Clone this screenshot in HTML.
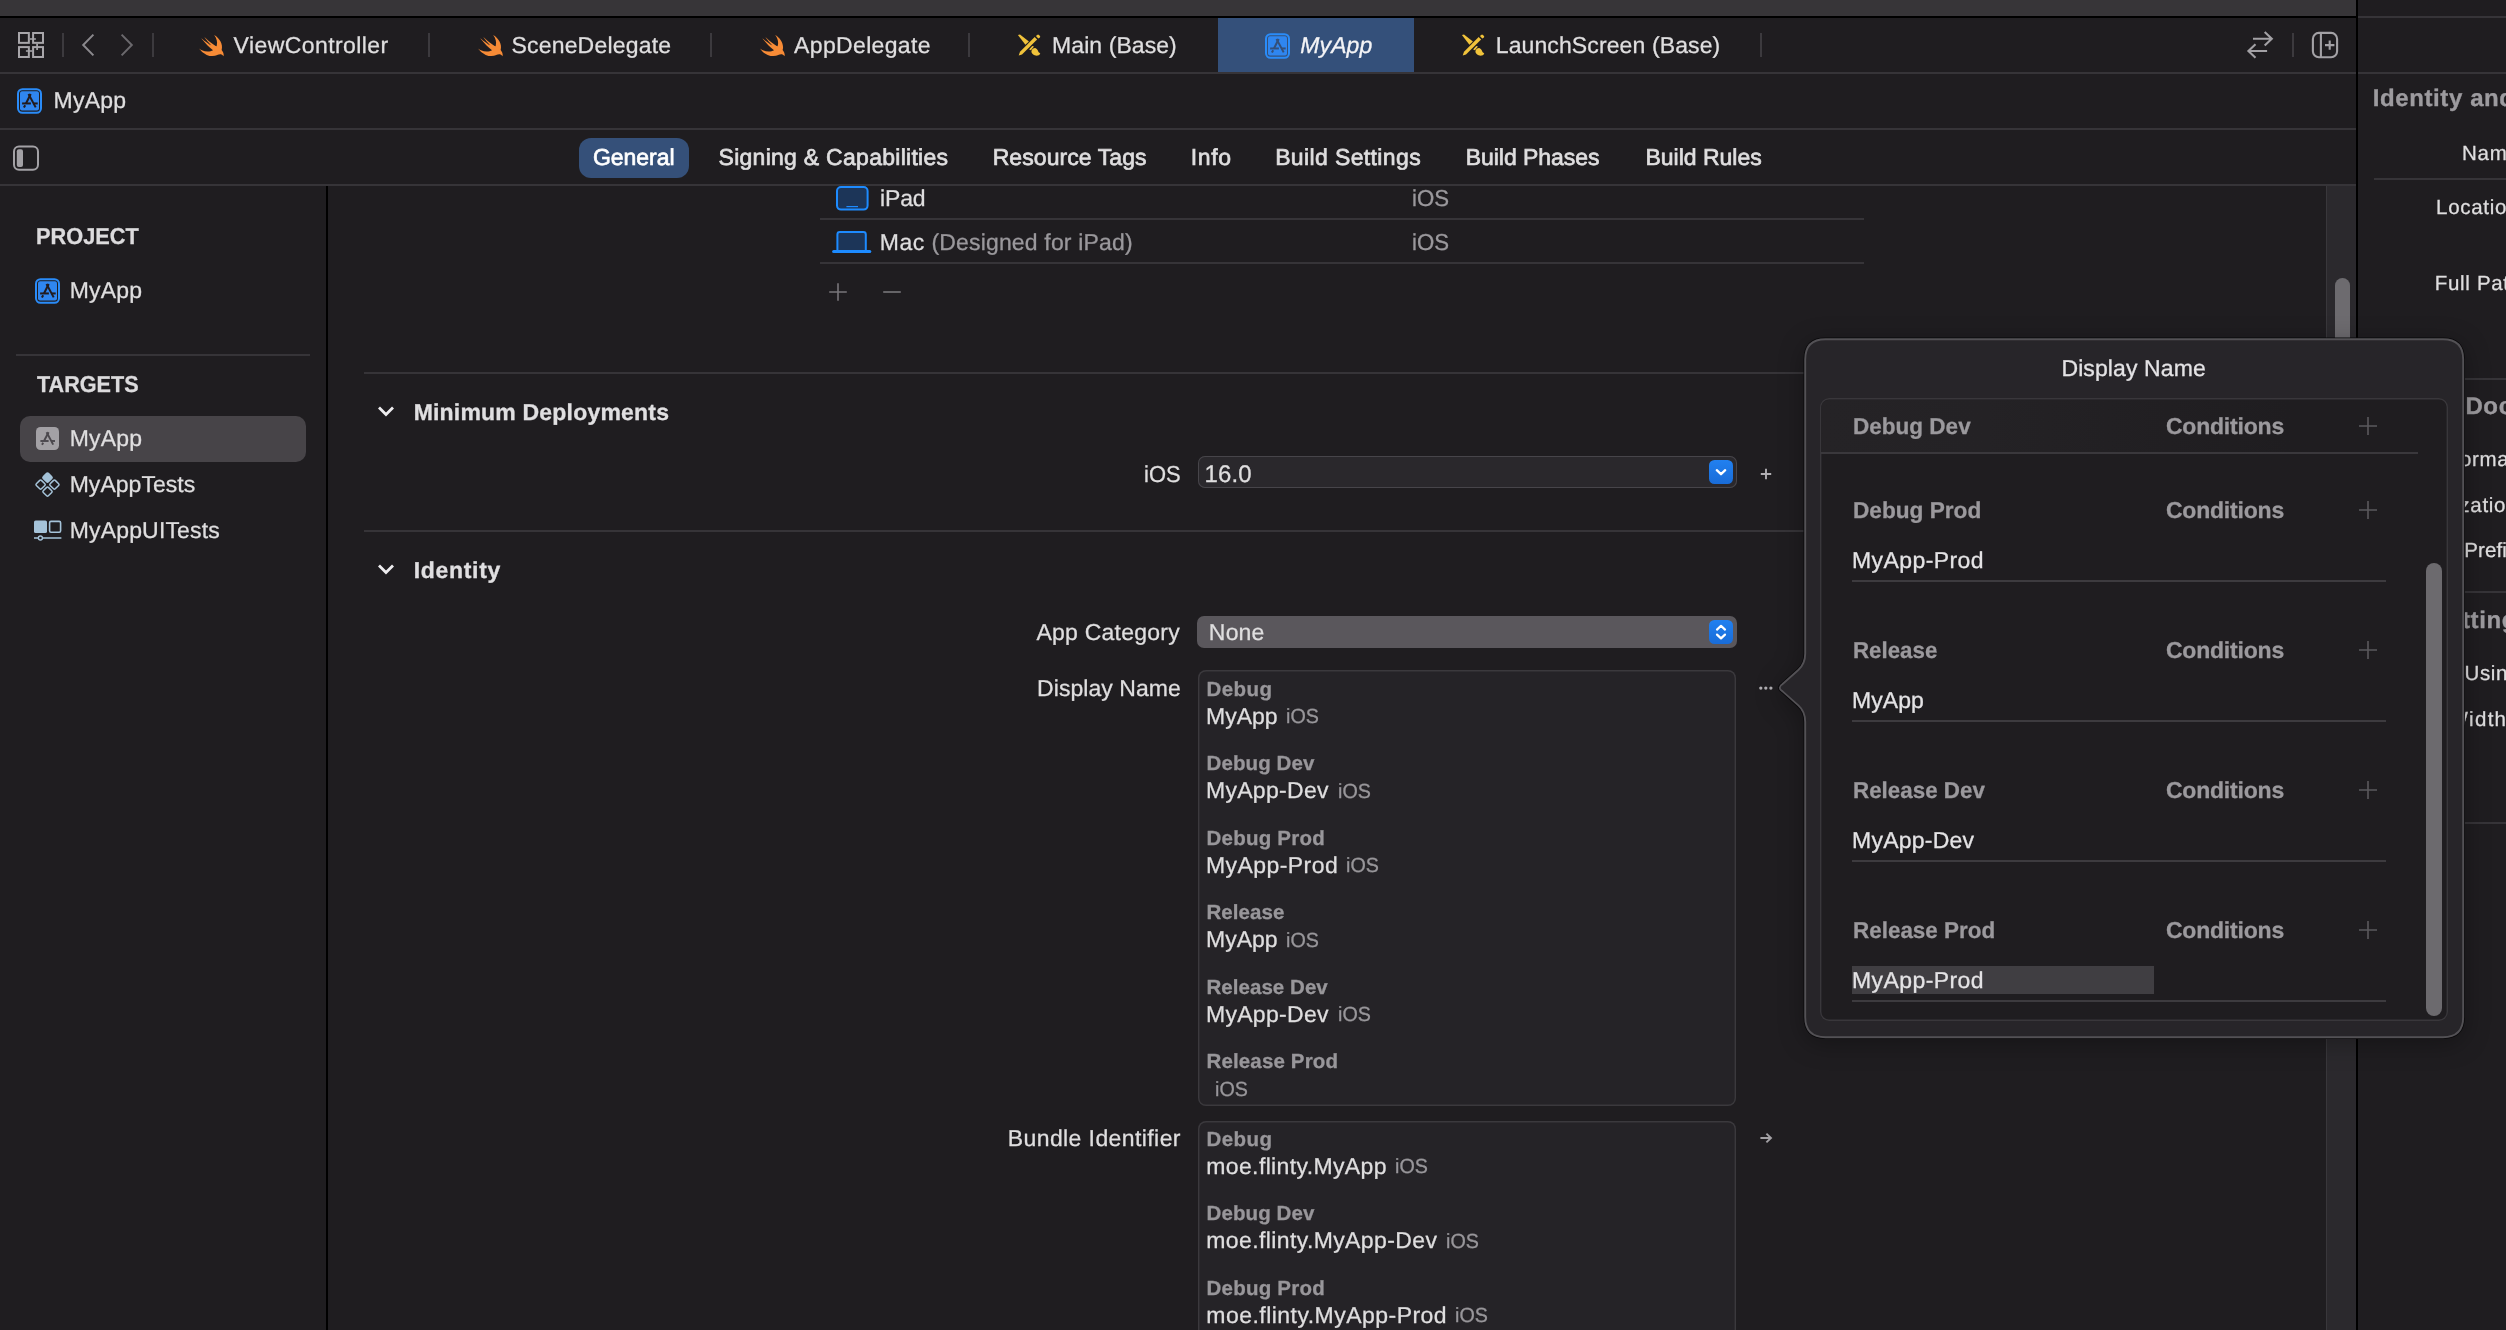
<!DOCTYPE html>
<html lang="en"><head><meta charset="utf-8"><title>MyApp — General</title>
<style>
html,body{margin:0;padding:0;background:#1f1d20;overflow:hidden;}
html{width:2506px;height:1330px;}
body{width:2506px;height:1330px;position:relative;overflow:hidden;font-family:"Liberation Sans", sans-serif;}
#app{position:absolute;left:0;top:0;width:2506px;height:1330px;overflow:hidden;will-change:transform;}
#app>div,#app>span,#app>svg{position:absolute;display:block;}
span{white-space:pre;line-height:1;text-rendering:geometricPrecision;}
svg{overflow:visible;}
</style></head><body><div id="app">
<div style="left:0px;top:0px;width:2356px;height:16px;background:#373538;"></div>
<div style="left:0px;top:16px;width:2356px;height:2px;background:#000;"></div>
<div style="left:2358px;top:0px;width:148px;height:16px;background:#1f1d20;"></div>
<div style="left:2358px;top:16.0px;width:148px;height:2px;background:#363438;"></div>
<div style="left:2358px;top:72.0px;width:148px;height:2px;background:#363438;"></div>
<div style="left:1218px;top:18px;width:196px;height:54px;background:#34507a;"></div>
<div style="left:0px;top:72.0px;width:2356px;height:2px;background:#363438;"></div>
<div style="left:0px;top:128.0px;width:2356px;height:2px;background:#363438;"></div>
<div style="left:0px;top:184.0px;width:2356px;height:2px;background:#363438;"></div>
<div style="left:62.0px;top:33px;width:2px;height:24px;background:#3c3a3e;"></div>
<div style="left:152.0px;top:33px;width:2px;height:24px;background:#3c3a3e;"></div>
<div style="left:428.0px;top:33px;width:2px;height:24px;background:#3c3a3e;"></div>
<div style="left:710.0px;top:33px;width:2px;height:24px;background:#3c3a3e;"></div>
<div style="left:968.0px;top:33px;width:2px;height:24px;background:#3c3a3e;"></div>
<div style="left:1760.0px;top:33px;width:2px;height:24px;background:#3c3a3e;"></div>
<div style="left:2292.0px;top:33px;width:2px;height:24px;background:#3c3a3e;"></div>
<svg style="left:17px;top:31px;" width="28" height="28" viewBox="0 0 28 28"><g fill="none" stroke="#a8a6aa" stroke-width="2"><rect x="2" y="2" width="9.85" height="9.85"/><rect x="16.1" y="2" width="9.9" height="9.85"/><rect x="2" y="16.1" width="9.85" height="9.9"/><rect x="16.1" y="16.1" width="9.9" height="9.9"/><path d="M12.85,8 H18.9 M20.1,12.85 V19 M8.9,20 H15.1" stroke-width="1.7"/></g></svg>
<svg style="left:80px;top:32px;" width="16" height="26" viewBox="0 0 16 26"><path d="M13.4,2.6 L3.2,13 L13.4,23.4" fill="none" stroke="#8b898d" stroke-width="2"/></svg>
<svg style="left:119px;top:32px;" width="16" height="26" viewBox="0 0 16 26"><path d="M2.6,2.6 L12.8,13 L2.6,23.4" fill="none" stroke="#6b696d" stroke-width="2"/></svg>
<svg style="left:199.3px;top:35px;" width="26" height="22" viewBox="0 0 26 22"><path transform="scale(1.3634,1.3076) translate(-2.411,-3.409)" fill="#f78b36" d="M13.543 3.41c4.114 2.47 6.545 7.162 5.549 11.131-.024.093-.05.181-.076.272l.002.001c2.062 2.538 1.5 5.258 1.236 4.745-1.072-2.086-3.066-1.568-4.088-1.043a6.803 6.803 0 0 1-.281.158l-.02.012-.002.002c-2.115 1.123-4.957 1.205-7.812-.022a12.568 12.568 0 0 1-5.64-4.838c.649.48 1.35.902 2.097 1.252 3.019 1.414 6.051 1.311 8.197-.002C9.651 12.73 7.101 9.67 5.146 7.191a10.628 10.628 0 0 1-1.005-1.384c2.34 2.142 6.038 4.83 7.365 5.576C8.69 8.408 6.208 4.743 6.324 4.86c4.436 4.47 8.528 6.996 8.528 6.996.154.085.27.154.36.213.085-.215.16-.437.224-.668.708-2.588-.09-5.548-1.893-7.992z"/></svg>
<span style="left:233.62px;top:34px;font-size:23px;color:#dfdedf;letter-spacing:0.413px;-webkit-text-stroke:0.3px #dfdedf;">ViewController</span>
<svg style="left:477.5px;top:35px;" width="26" height="22" viewBox="0 0 26 22"><path transform="scale(1.3634,1.3076) translate(-2.411,-3.409)" fill="#f78b36" d="M13.543 3.41c4.114 2.47 6.545 7.162 5.549 11.131-.024.093-.05.181-.076.272l.002.001c2.062 2.538 1.5 5.258 1.236 4.745-1.072-2.086-3.066-1.568-4.088-1.043a6.803 6.803 0 0 1-.281.158l-.02.012-.002.002c-2.115 1.123-4.957 1.205-7.812-.022a12.568 12.568 0 0 1-5.64-4.838c.649.48 1.35.902 2.097 1.252 3.019 1.414 6.051 1.311 8.197-.002C9.651 12.73 7.101 9.67 5.146 7.191a10.628 10.628 0 0 1-1.005-1.384c2.34 2.142 6.038 4.83 7.365 5.576C8.69 8.408 6.208 4.743 6.324 4.86c4.436 4.47 8.528 6.996 8.528 6.996.154.085.27.154.36.213.085-.215.16-.437.224-.668.708-2.588-.09-5.548-1.893-7.992z"/></svg>
<span style="left:511.43px;top:34px;font-size:23px;color:#dfdedf;letter-spacing:0.195px;-webkit-text-stroke:0.3px #dfdedf;">SceneDelegate</span>
<svg style="left:759.6px;top:35px;" width="26" height="22" viewBox="0 0 26 22"><path transform="scale(1.3634,1.3076) translate(-2.411,-3.409)" fill="#f78b36" d="M13.543 3.41c4.114 2.47 6.545 7.162 5.549 11.131-.024.093-.05.181-.076.272l.002.001c2.062 2.538 1.5 5.258 1.236 4.745-1.072-2.086-3.066-1.568-4.088-1.043a6.803 6.803 0 0 1-.281.158l-.02.012-.002.002c-2.115 1.123-4.957 1.205-7.812-.022a12.568 12.568 0 0 1-5.64-4.838c.649.48 1.35.902 2.097 1.252 3.019 1.414 6.051 1.311 8.197-.002C9.651 12.73 7.101 9.67 5.146 7.191a10.628 10.628 0 0 1-1.005-1.384c2.34 2.142 6.038 4.83 7.365 5.576C8.69 8.408 6.208 4.743 6.324 4.86c4.436 4.47 8.528 6.996 8.528 6.996.154.085.27.154.36.213.085-.215.16-.437.224-.668.708-2.588-.09-5.548-1.893-7.992z"/></svg>
<span style="left:794.08px;top:34px;font-size:23px;color:#dfdedf;letter-spacing:0.347px;-webkit-text-stroke:0.3px #dfdedf;">AppDelegate</span>
<svg style="left:1017px;top:34px;" width="24" height="23" viewBox="0 0 24 23"><g fill="#f1c33b"><path d="M1.7,21.4 L3.0,17.7 L17.7,3.1 L20.1,5.4 L5.0,20.6 Z"/><path d="M18.9,2.0 L20.6,0.7 Q21.3,0.3 21.9,0.9 L23.0,2.1 Q23.5,2.8 22.9,3.4 L21.3,4.5 Z"/><path d="M0.9,0.9 L3,0.6 L11.9,7.4 L8.4,10.7 Z"/><path d="M12.1,15.6 L15.3,12.0 L17,12.4 L13.9,16.3 Z"/><path d="M14.4,17.3 C15,15 17,13.8 18.6,14.2 C20.5,14.8 21,17 21.5,18 C22,18.8 23,19 23.3,19.5 C22.5,21.5 20,22 18.5,21.6 C16.5,21 14.2,19.5 14.4,17.3 Z"/></g></svg>
<span style="left:1052.06px;top:34px;font-size:23px;color:#dfdedf;letter-spacing:0.074px;-webkit-text-stroke:0.3px #dfdedf;">Main (Base)</span>
<svg style="left:1265px;top:32.6px;" width="25" height="26" viewBox="0 0 25 25.7"><rect x="1" y="1" width="23" height="23.7" rx="4.5" fill="#34507a" stroke="#2a8cf9" stroke-width="2"/><rect x="3" y="3.1" width="19" height="19.3" rx="2" fill="#2f86f0"/><g stroke="#34507a" stroke-width="2" fill="none" stroke-linecap="butt"><path d="M13.7,5.8 L9.0,15.3"/><path d="M11.5,5.8 L18.7,19.2"/><path d="M5.1,15.3 H13.9"/><path d="M16.3,15.3 H20.7"/><path d="M8.2,17.0 L6.9,19.4"/></g></svg>
<span style="left:1300.36px;top:34px;font-size:23px;color:#f4f4f6;letter-spacing:0.061px;font-style:italic;-webkit-text-stroke:0.3px #f4f4f6;">MyApp</span>
<svg style="left:1461px;top:34px;" width="24" height="23" viewBox="0 0 24 23"><g fill="#f1c33b"><path d="M1.7,21.4 L3.0,17.7 L17.7,3.1 L20.1,5.4 L5.0,20.6 Z"/><path d="M18.9,2.0 L20.6,0.7 Q21.3,0.3 21.9,0.9 L23.0,2.1 Q23.5,2.8 22.9,3.4 L21.3,4.5 Z"/><path d="M0.9,0.9 L3,0.6 L11.9,7.4 L8.4,10.7 Z"/><path d="M12.1,15.6 L15.3,12.0 L17,12.4 L13.9,16.3 Z"/><path d="M14.4,17.3 C15,15 17,13.8 18.6,14.2 C20.5,14.8 21,17 21.5,18 C22,18.8 23,19 23.3,19.5 C22.5,21.5 20,22 18.5,21.6 C16.5,21 14.2,19.5 14.4,17.3 Z"/></g></svg>
<span style="left:1495.76px;top:34px;font-size:23px;color:#dfdedf;letter-spacing:0.111px;-webkit-text-stroke:0.3px #dfdedf;">LaunchScreen (Base)</span>
<svg style="left:2246px;top:30px;" width="28" height="30" viewBox="0 0 28 30"><g fill="none" stroke="#a3a1a5" stroke-width="2.1" stroke-linejoin="miter"><path d="M7,8.8 H25.4 M18.7,2.1 L25.8,8.8 L18.7,15.6"/><path d="M21.1,21 H2.8 M9.5,14.2 L2.4,21 L9.5,27.8"/></g></svg>
<svg style="left:2311px;top:31px;" width="28" height="28" viewBox="0 0 28 28"><g fill="none" stroke="#a3a1a5" stroke-width="2.1"><rect x="1.9" y="1.9" width="24.2" height="24.4" rx="6"/><path d="M9.9,2 V26 M14,14.1 H23.4 M18.7,9.4 V18.8"/></g></svg>
<svg style="left:17px;top:87.6px;" width="25" height="26" viewBox="0 0 25 25.7"><rect x="1" y="1" width="23" height="23.7" rx="4.5" fill="#1f1d20" stroke="#2a8cf9" stroke-width="2"/><rect x="3" y="3.1" width="19" height="19.3" rx="2" fill="#2f86f0"/><g stroke="#221b1e" stroke-width="2" fill="none" stroke-linecap="butt"><path d="M13.7,5.8 L9.0,15.3"/><path d="M11.5,5.8 L18.7,19.2"/><path d="M5.1,15.3 H13.9"/><path d="M16.3,15.3 H20.7"/><path d="M8.2,17.0 L6.9,19.4"/></g></svg>
<span style="left:53.56px;top:89px;font-size:23px;color:#dfdedf;letter-spacing:0.216px;-webkit-text-stroke:0.3px #dfdedf;">MyApp</span>
<svg style="left:12px;top:144px;" width="28" height="28" viewBox="0 0 28 28"><rect x="2" y="2.4" width="24" height="23.4" rx="5" fill="none" stroke="#a3a1a5" stroke-width="2"/><rect x="4.8" y="5.2" width="6.2" height="17.8" rx="2" fill="#a3a1a5"/></svg>
<div style="left:579px;top:138px;width:110px;height:40px;background:#355079;border-radius:12px;"></div>
<span style="left:592.94px;top:146px;font-size:23px;color:#ffffff;letter-spacing:-0.021px;-webkit-text-stroke:0.7px #ffffff;">General</span>
<span style="left:718.53px;top:146px;font-size:23px;color:#dfdedf;letter-spacing:0.275px;-webkit-text-stroke:0.7px #dfdedf;">Signing &amp; Capabilities</span>
<span style="left:992.66px;top:146px;font-size:23px;color:#dfdedf;letter-spacing:0.080px;-webkit-text-stroke:0.7px #dfdedf;">Resource Tags</span>
<span style="left:1190.79px;top:146px;font-size:23px;color:#dfdedf;letter-spacing:0.592px;-webkit-text-stroke:0.7px #dfdedf;">Info</span>
<span style="left:1275.16px;top:146px;font-size:23px;color:#dfdedf;letter-spacing:0.372px;-webkit-text-stroke:0.7px #dfdedf;">Build Settings</span>
<span style="left:1465.66px;top:146px;font-size:23px;color:#dfdedf;letter-spacing:-0.028px;-webkit-text-stroke:0.7px #dfdedf;">Build Phases</span>
<span style="left:1645.46px;top:146px;font-size:23px;color:#dfdedf;letter-spacing:-0.011px;-webkit-text-stroke:0.7px #dfdedf;">Build Rules</span>
<div style="left:325.8px;top:186px;width:2.4px;height:1144px;background:#000;"></div>
<span style="left:36.11px;top:225px;font-size:23px;color:#dcdbdd;transform:scaleX(0.9458);transform-origin:0 0;font-weight:700;-webkit-text-stroke:0.3px #dcdbdd;">PROJECT</span>
<svg style="left:35px;top:277.6px;" width="25" height="26" viewBox="0 0 25 25.7"><rect x="1" y="1" width="23" height="23.7" rx="4.5" fill="#1f1d20" stroke="#2a8cf9" stroke-width="2"/><rect x="3" y="3.1" width="19" height="19.3" rx="2" fill="#2f86f0"/><g stroke="#221b1e" stroke-width="2" fill="none" stroke-linecap="butt"><path d="M13.7,5.8 L9.0,15.3"/><path d="M11.5,5.8 L18.7,19.2"/><path d="M5.1,15.3 H13.9"/><path d="M16.3,15.3 H20.7"/><path d="M8.2,17.0 L6.9,19.4"/></g></svg>
<span style="left:69.66px;top:279px;font-size:23px;color:#dfdedf;letter-spacing:0.191px;-webkit-text-stroke:0.3px #dfdedf;">MyApp</span>
<div style="left:16px;top:354.0px;width:294px;height:2px;background:#363438;"></div>
<span style="left:37.29px;top:373px;font-size:23px;color:#dcdbdd;transform:scaleX(0.9395);transform-origin:0 0;font-weight:700;-webkit-text-stroke:0.3px #dcdbdd;">TARGETS</span>
<div style="left:20px;top:416px;width:286px;height:46px;background:#474448;border-radius:10px;"></div>
<svg style="left:36px;top:427px;" width="23" height="23" viewBox="0 0 23 23"><rect x="0" y="0" width="23" height="23" rx="4.5" fill="#a3a1a5"/><g stroke="#4b484d" stroke-width="1.9" fill="none"><path d="M12.6,5.2 L8.0,14.0"/><path d="M10.6,5.2 L17.2,17.6"/><path d="M4.4,14.0 H12.6"/><path d="M15.0,14.0 H19.0"/><path d="M7.2,15.8 L6.0,17.8"/></g></svg>
<span style="left:69.66px;top:427px;font-size:23px;color:#dfdedf;letter-spacing:0.191px;-webkit-text-stroke:0.3px #dfdedf;">MyApp</span>
<svg style="left:34px;top:471px;" width="28" height="28" viewBox="0 0 28 28"><rect x="9.9" y="2.9999999999999996" width="7.2" height="7.2" rx="1.2" transform="rotate(45 13.5 6.6)" fill="#a5c3d9" stroke="#a5c3d9" stroke-width="1.5"/><rect x="2.9999999999999996" y="10.0" width="7.2" height="7.2" rx="1.2" transform="rotate(45 6.6 13.6)" fill="none" stroke="#a5c3d9" stroke-width="1.5"/><rect x="16.799999999999997" y="10.0" width="7.2" height="7.2" rx="1.2" transform="rotate(45 20.4 13.6)" fill="none" stroke="#a5c3d9" stroke-width="1.5"/><rect x="9.9" y="17.0" width="7.2" height="7.2" rx="1.2" transform="rotate(45 13.5 20.6)" fill="none" stroke="#a5c3d9" stroke-width="1.5"/></svg>
<span style="left:69.66px;top:473px;font-size:23px;color:#dfdedf;letter-spacing:0.032px;-webkit-text-stroke:0.3px #dfdedf;">MyAppTests</span>
<svg style="left:33px;top:519px;" width="30" height="24" viewBox="0 0 30 24"><rect x="1" y="1.6" width="13" height="12.4" rx="1.6" fill="#a5c3d9"/><rect x="16.6" y="2.4" width="11" height="10.8" rx="1.4" fill="none" stroke="#a5c3d9" stroke-width="1.6"/><path d="M1,19 H5 M9.8,19 H28.4" stroke="#a5c3d9" stroke-width="1.6"/><circle cx="7.4" cy="19" r="2" fill="none" stroke="#a5c3d9" stroke-width="1.4"/></svg>
<span style="left:69.66px;top:519px;font-size:23px;color:#dfdedf;letter-spacing:0.172px;-webkit-text-stroke:0.3px #dfdedf;">MyAppUITests</span>
<div style="left:2326px;top:186px;width:30px;height:1144px;background:#2b292d;"></div>
<div style="left:2326.0px;top:186px;width:1px;height:1144px;background:#39373b;"></div>
<div style="left:2335px;top:278px;width:14.5px;height:80px;background:#6d6b6f;border-radius:8px;"></div>
<svg style="left:835px;top:185px;" width="35" height="27" viewBox="0 0 35 27"><rect x="2" y="2" width="30.6" height="22.6" rx="4" fill="#1c3558" stroke="#1d8bff" stroke-width="2"/><path d="M11.4,21.6 H23" stroke="#1d8bff" stroke-width="1.2"/></svg>
<span style="left:879.93px;top:187px;font-size:23px;color:#dfdedf;letter-spacing:-0.103px;-webkit-text-stroke:0.3px #dfdedf;">iPad</span>
<span style="left:1411.88px;top:187px;font-size:23px;color:#9a989c;transform:scaleX(0.9654);transform-origin:0 0;-webkit-text-stroke:0.3px #9a989c;">iOS</span>
<div style="left:820px;top:218.0px;width:1044px;height:2px;background:#363438;"></div>
<svg style="left:831px;top:229px;" width="42" height="26" viewBox="0 0 42 26"><path d="M6.4,21 V5.4 Q6.4,3 8.8,3 H32.4 Q34.8,3 34.8,5.4 V21" fill="#1c3558" stroke="#1d8bff" stroke-width="2"/><path d="M2.6,22.6 H38.8" stroke="#1d8bff" stroke-width="3" stroke-linecap="round"/></svg>
<span style="left:879.86px;top:231px;font-size:23px;color:#dfdedf;letter-spacing:0.468px;-webkit-text-stroke:0.3px #dfdedf;">Mac</span>
<span style="left:931.40px;top:231px;font-size:23px;color:#9a989c;letter-spacing:0.171px;-webkit-text-stroke:0.3px #9a989c;">(Designed for iPad)</span>
<span style="left:1411.88px;top:231px;font-size:23px;color:#9a989c;transform:scaleX(0.9654);transform-origin:0 0;-webkit-text-stroke:0.3px #9a989c;">iOS</span>
<div style="left:820px;top:262.0px;width:1044px;height:2px;background:#363438;"></div>
<svg style="left:828px;top:282px;" width="20" height="20" viewBox="0 0 20 20"><path d="M1.2,10 H18.8 M10,1.2 V18.8" stroke="#78767a" stroke-width="1.6"/></svg>
<svg style="left:882px;top:282px;" width="20" height="20" viewBox="0 0 20 20"><path d="M1.2,10 H18.8" stroke="#78767a" stroke-width="1.6"/></svg>
<div style="left:364px;top:372.0px;width:1928px;height:2px;background:#363438;"></div>
<svg style="left:377px;top:405px;" width="18" height="13" viewBox="0 0 18 13"><path d="M2,2.4 L9,9.4 L16,2.4" fill="none" stroke="#eeedef" stroke-width="2.8"/></svg>
<span style="left:413.63px;top:401px;font-size:23px;color:#e0dfe1;letter-spacing:0.197px;font-weight:700;-webkit-text-stroke:0.3px #e0dfe1;">Minimum Deployments</span>
<span style="left:1144.10px;top:463px;font-size:23px;color:#dfdedf;transform:scaleX(0.9543);transform-origin:0 0;-webkit-text-stroke:0.3px #dfdedf;">iOS</span>
<div style="left:1198px;top:456px;width:539px;height:32px;background:#2a282c;border-radius:7px;box-shadow:inset 0 0 0 1px #47454a;"></div>
<span style="left:1204.43px;top:463px;font-size:24px;color:#dfdedf;letter-spacing:0.171px;-webkit-text-stroke:0.3px #dfdedf;">16.0</span>
<svg style="left:1709px;top:460.2px;" width="24" height="24" viewBox="0 0 24 24"><defs><linearGradient id="gdown" x1="0" y1="0" x2="0" y2="1"><stop offset="0" stop-color="#2180f0"/><stop offset="1" stop-color="#196cd8"/></linearGradient></defs><rect width="24" height="24" rx="5.5" fill="url(#gdown)"/><path d="M7.8,10.2 L12,14.2 L16.2,10.2" fill="none" stroke="#fff" stroke-width="2.3" stroke-linecap="round" stroke-linejoin="round"/></svg>
<svg style="left:1759px;top:467px;" width="14" height="14" viewBox="0 0 14 14"><path d="M1.8,7 H12.2 M7,1.8 V12.2" stroke="#b1afb3" stroke-width="1.9"/></svg>
<div style="left:364px;top:530.0px;width:1928px;height:2px;background:#363438;"></div>
<svg style="left:377px;top:563px;" width="18" height="13" viewBox="0 0 18 13"><path d="M2,2.4 L9,9.4 L16,2.4" fill="none" stroke="#eeedef" stroke-width="2.8"/></svg>
<span style="left:413.63px;top:559px;font-size:23px;color:#e0dfe1;letter-spacing:0.703px;font-weight:700;-webkit-text-stroke:0.3px #e0dfe1;">Identity</span>
<span style="left:1036.48px;top:621px;font-size:23px;color:#dfdedf;letter-spacing:0.240px;-webkit-text-stroke:0.3px #dfdedf;">App Category</span>
<div style="left:1197px;top:616.4px;width:540px;height:31.6px;background:#5a575c;border-radius:7px;"></div>
<span style="left:1208.86px;top:621px;font-size:23px;color:#dfdedf;letter-spacing:0.167px;-webkit-text-stroke:0.3px #dfdedf;">None</span>
<svg style="left:1709px;top:620px;" width="24" height="24" viewBox="0 0 24 24"><defs><linearGradient id="gud" x1="0" y1="0" x2="0" y2="1"><stop offset="0" stop-color="#2180f0"/><stop offset="1" stop-color="#196cd8"/></linearGradient></defs><rect width="24" height="24" rx="5.5" fill="url(#gud)"/><path d="M8,9.6 L12,5.8 L16,9.6 M8,14.6 L12,18.4 L16,14.6" fill="none" stroke="#fff" stroke-width="2.2" stroke-linecap="round" stroke-linejoin="round"/></svg>
<span style="left:1037.06px;top:677px;font-size:23px;color:#dfdedf;letter-spacing:0.055px;-webkit-text-stroke:0.3px #dfdedf;">Display Name</span>
<div style="left:1198px;top:670px;width:538px;height:435.5px;background:#252327;border-radius:8px;box-shadow:inset 0 0 0 1.4px #3b393d;"></div>
<svg style="left:1757px;top:684px;" width="18" height="8" viewBox="0 0 18 8"><circle cx="3.8" cy="4.06" r="1.65" fill="#b1afb3"/><circle cx="8.8" cy="4.06" r="1.65" fill="#b1afb3"/><circle cx="13.9" cy="4.06" r="1.65" fill="#b1afb3"/></svg>
<span style="left:1206.47px;top:680px;font-size:20.5px;color:#98969a;letter-spacing:0.425px;font-weight:700;-webkit-text-stroke:0.3px #98969a;">Debug</span>
<span style="left:1205.96px;top:705px;font-size:23px;color:#dfdedf;letter-spacing:0.016px;-webkit-text-stroke:0.3px #dfdedf;">MyApp</span>
<span style="left:1286.42px;top:707px;font-size:20.5px;color:#98969a;transform:scaleX(0.9621);transform-origin:0 0;-webkit-text-stroke:0.3px #98969a;">iOS</span>
<span style="left:1206.47px;top:754px;font-size:20.5px;color:#98969a;letter-spacing:0.112px;font-weight:700;-webkit-text-stroke:0.3px #98969a;">Debug Dev</span>
<span style="left:1205.96px;top:779px;font-size:23px;color:#dfdedf;letter-spacing:0.304px;-webkit-text-stroke:0.3px #dfdedf;">MyApp-Dev</span>
<span style="left:1338.12px;top:782px;font-size:20.5px;color:#98969a;transform:scaleX(0.9621);transform-origin:0 0;-webkit-text-stroke:0.3px #98969a;">iOS</span>
<span style="left:1206.47px;top:829px;font-size:20.5px;color:#98969a;letter-spacing:0.235px;font-weight:700;-webkit-text-stroke:0.3px #98969a;">Debug Prod</span>
<span style="left:1205.96px;top:854px;font-size:23px;color:#dfdedf;letter-spacing:0.434px;-webkit-text-stroke:0.3px #dfdedf;">MyApp-Prod</span>
<span style="left:1346.02px;top:856px;font-size:20.5px;color:#98969a;transform:scaleX(0.9621);transform-origin:0 0;-webkit-text-stroke:0.3px #98969a;">iOS</span>
<span style="left:1206.47px;top:903px;font-size:20.5px;color:#98969a;letter-spacing:0.057px;font-weight:700;-webkit-text-stroke:0.3px #98969a;">Release</span>
<span style="left:1205.96px;top:928px;font-size:23px;color:#dfdedf;letter-spacing:0.016px;-webkit-text-stroke:0.3px #dfdedf;">MyApp</span>
<span style="left:1286.42px;top:931px;font-size:20.5px;color:#98969a;transform:scaleX(0.9621);transform-origin:0 0;-webkit-text-stroke:0.3px #98969a;">iOS</span>
<span style="left:1206.47px;top:978px;font-size:20.5px;color:#98969a;letter-spacing:0.046px;font-weight:700;-webkit-text-stroke:0.3px #98969a;">Release Dev</span>
<span style="left:1205.96px;top:1003px;font-size:23px;color:#dfdedf;letter-spacing:0.304px;-webkit-text-stroke:0.3px #dfdedf;">MyApp-Dev</span>
<span style="left:1338.12px;top:1005px;font-size:20.5px;color:#98969a;transform:scaleX(0.9621);transform-origin:0 0;-webkit-text-stroke:0.3px #98969a;">iOS</span>
<span style="left:1206.47px;top:1052px;font-size:20.5px;color:#98969a;letter-spacing:0.143px;font-weight:700;-webkit-text-stroke:0.3px #98969a;">Release Prod</span>
<span style="left:1214.52px;top:1080px;font-size:20.5px;color:#98969a;transform:scaleX(0.9621);transform-origin:0 0;-webkit-text-stroke:0.3px #98969a;">iOS</span>
<span style="left:1007.76px;top:1127px;font-size:23px;color:#dfdedf;letter-spacing:0.408px;-webkit-text-stroke:0.3px #dfdedf;">Bundle Identifier</span>
<div style="left:1198px;top:1120.5px;width:538px;height:230px;background:#252327;border-radius:8px;box-shadow:inset 0 0 0 1.4px #3b393d;"></div>
<svg style="left:1758px;top:1131px;" width="16" height="14" viewBox="0 0 16 14"><path d="M2.4,7 H12.6 M8.4,2.6 L13,7 L8.4,11.4" fill="none" stroke="#a3a1a5" stroke-width="1.9"/></svg>
<span style="left:1206.47px;top:1130px;font-size:20.5px;color:#98969a;letter-spacing:0.425px;font-weight:700;-webkit-text-stroke:0.3px #98969a;">Debug</span>
<span style="left:1206.29px;top:1155px;font-size:23px;color:#dfdedf;letter-spacing:0.367px;-webkit-text-stroke:0.3px #dfdedf;">moe.flinty.MyApp</span>
<span style="left:1395.42px;top:1157px;font-size:20.5px;color:#98969a;transform:scaleX(0.9621);transform-origin:0 0;-webkit-text-stroke:0.3px #98969a;">iOS</span>
<span style="left:1206.47px;top:1204px;font-size:20.5px;color:#98969a;letter-spacing:0.112px;font-weight:700;-webkit-text-stroke:0.3px #98969a;">Debug Dev</span>
<span style="left:1206.29px;top:1229px;font-size:23px;color:#dfdedf;letter-spacing:0.389px;-webkit-text-stroke:0.3px #dfdedf;">moe.flinty.MyApp-Dev</span>
<span style="left:1446.42px;top:1232px;font-size:20.5px;color:#98969a;transform:scaleX(0.9621);transform-origin:0 0;-webkit-text-stroke:0.3px #98969a;">iOS</span>
<span style="left:1206.47px;top:1279px;font-size:20.5px;color:#98969a;letter-spacing:0.235px;font-weight:700;-webkit-text-stroke:0.3px #98969a;">Debug Prod</span>
<span style="left:1206.29px;top:1304px;font-size:23px;color:#dfdedf;letter-spacing:0.471px;-webkit-text-stroke:0.3px #dfdedf;">moe.flinty.MyApp-Prod</span>
<span style="left:1455.12px;top:1306px;font-size:20.5px;color:#98969a;transform:scaleX(0.9621);transform-origin:0 0;-webkit-text-stroke:0.3px #98969a;">iOS</span>
<div style="left:2355.8px;top:0px;width:2.4px;height:1330px;background:#000;"></div>
<span style="left:2372.75px;top:87px;font-size:24px;color:#9d9b9f;letter-spacing:0.600px;font-weight:700;-webkit-text-stroke:0.35px #9d9b9f;">Identity and Type</span>
<span style="left:2462.08px;top:144px;font-size:20.5px;color:#dfdedf;letter-spacing:0.700px;-webkit-text-stroke:0.3px #dfdedf;">Name</span>
<div style="left:2374px;top:178.0px;width:132px;height:2px;background:#363438;"></div>
<span style="left:2436.08px;top:198px;font-size:20.5px;color:#dfdedf;letter-spacing:0.700px;-webkit-text-stroke:0.3px #dfdedf;">Location</span>
<span style="left:2434.68px;top:274px;font-size:20.5px;color:#dfdedf;letter-spacing:0.700px;-webkit-text-stroke:0.3px #dfdedf;">Full Path</span>
<div style="left:2374px;top:378.0px;width:132px;height:2px;background:#363438;"></div>
<span style="left:2372.62px;top:395px;font-size:24px;color:#9d9b9f;letter-spacing:0.600px;font-weight:700;-webkit-text-stroke:0.35px #9d9b9f;">Project Document</span>
<span style="left:2371.62px;top:450px;font-size:20.5px;color:#dfdedf;letter-spacing:0.700px;-webkit-text-stroke:0.3px #dfdedf;">Project Format</span>
<span style="left:2393.62px;top:496px;font-size:20.5px;color:#dfdedf;letter-spacing:0.700px;-webkit-text-stroke:0.3px #dfdedf;">Organization</span>
<span style="left:2406.72px;top:541px;font-size:20.5px;color:#dfdedf;letter-spacing:0.100px;-webkit-text-stroke:0.3px #dfdedf;">Class Prefix</span>
<div style="left:2374px;top:591.0px;width:132px;height:2px;background:#363438;"></div>
<span style="left:2374.16px;top:609px;font-size:24px;color:#9d9b9f;letter-spacing:0.600px;font-weight:700;-webkit-text-stroke:0.35px #9d9b9f;">Text Settings</span>
<span style="left:2396.80px;top:664px;font-size:20.5px;color:#dfdedf;letter-spacing:0.700px;-webkit-text-stroke:0.3px #dfdedf;">Indent Using</span>
<span style="left:2448.43px;top:710px;font-size:20.5px;color:#dfdedf;letter-spacing:1.300px;-webkit-text-stroke:0.3px #dfdedf;">Widths</span>
<div style="left:2374px;top:822.0px;width:132px;height:2px;background:#363438;"></div>
<svg style="left:1770px;top:320px;filter:drop-shadow(0 5px 12px rgba(0,0,0,.3));" width="720" height="750" viewBox="1770 320 720 750">
<path d="M1825.4,339.2 H2443 Q2463.2,339.2 2463.2,359.4 V1017 Q2463.2,1037.2 2443,1037.2 H1825.4 Q1805.2,1037.2 1805.2,1017 V721.9 C1805.2,715.4 1803.7,710.2 1798.3,705.4 L1782.6,691.4 Q1776.8,687.7 1782.6,684 L1798.3,670 C1803.7,665.2 1805.2,660 1805.2,653.5 V359.4 Q1805.2,339.2 1825.4,339.2 Z" fill="none" stroke="#09080a" stroke-width="3.4"/>
<path d="M1825.4,339.2 H2443 Q2463.2,339.2 2463.2,359.4 V1017 Q2463.2,1037.2 2443,1037.2 H1825.4 Q1805.2,1037.2 1805.2,1017 V721.9 C1805.2,715.4 1803.7,710.2 1798.3,705.4 L1782.6,691.4 Q1776.8,687.7 1782.6,684 L1798.3,670 C1803.7,665.2 1805.2,660 1805.2,653.5 V359.4 Q1805.2,339.2 1825.4,339.2 Z" fill="#272529" stroke="#535155" stroke-width="1.9"/>
</svg>
<span style="left:2061.46px;top:357px;font-size:23px;color:#e4e3e5;letter-spacing:0.100px;-webkit-text-stroke:0.3px #e4e3e5;">Display Name</span>
<div style="left:1819.6px;top:398.2px;width:628.2px;height:623.3px;background:#1f1d20;border-radius:9px;box-shadow:inset 0 0 0 1.4px #39373b;"></div>
<div style="left:1821px;top:399.6px;width:470px;height:53px;background:linear-gradient(90deg,#252326 0%,#242225 35%,#1f1d20 100%);border-radius:8px 0 0 0;"></div>
<span style="left:1852.66px;top:415px;font-size:23px;color:#9b999d;transform:scaleX(0.9794);transform-origin:0 0;font-weight:700;-webkit-text-stroke:0.3px #9b999d;">Debug Dev</span>
<span style="left:2165.90px;top:415px;font-size:23px;color:#9b999d;letter-spacing:-0.200px;font-weight:700;-webkit-text-stroke:0.3px #9b999d;">Conditions</span>
<svg style="left:2358px;top:415.6px;" width="20" height="20" viewBox="0 0 20 20"><path d="M1,10 H19 M10,1 V19" stroke="#5b595d" stroke-width="1.6"/></svg>
<div style="left:1820.6px;top:452.3px;width:597.4000000000001px;height:2px;background:#3a383c;"></div>
<span style="left:1852.65px;top:499px;font-size:23px;color:#9b999d;transform:scaleX(0.9842);transform-origin:0 0;font-weight:700;-webkit-text-stroke:0.3px #9b999d;">Debug Prod</span>
<span style="left:2165.90px;top:499px;font-size:23px;color:#9b999d;letter-spacing:-0.200px;font-weight:700;-webkit-text-stroke:0.3px #9b999d;">Conditions</span>
<svg style="left:2358px;top:499.6px;" width="20" height="20" viewBox="0 0 20 20"><path d="M1,10 H19 M10,1 V19" stroke="#5b595d" stroke-width="1.6"/></svg>
<span style="left:1852.06px;top:549px;font-size:23px;color:#e4e3e5;letter-spacing:0.412px;-webkit-text-stroke:0.3px #e4e3e5;">MyApp-Prod</span>
<div style="left:1852px;top:580.0px;width:534px;height:2px;background:#3d3b3f;"></div>
<span style="left:1852.67px;top:639px;font-size:23px;color:#9b999d;transform:scaleX(0.9696);transform-origin:0 0;font-weight:700;-webkit-text-stroke:0.3px #9b999d;">Release</span>
<span style="left:2165.90px;top:639px;font-size:23px;color:#9b999d;letter-spacing:-0.200px;font-weight:700;-webkit-text-stroke:0.3px #9b999d;">Conditions</span>
<svg style="left:2358px;top:639.6px;" width="20" height="20" viewBox="0 0 20 20"><path d="M1,10 H19 M10,1 V19" stroke="#5b595d" stroke-width="1.6"/></svg>
<span style="left:1852.06px;top:689px;font-size:23px;color:#e4e3e5;letter-spacing:0.041px;-webkit-text-stroke:0.3px #e4e3e5;">MyApp</span>
<div style="left:1852px;top:720.0px;width:534px;height:2px;background:#3d3b3f;"></div>
<span style="left:1852.67px;top:779px;font-size:23px;color:#9b999d;transform:scaleX(0.9727);transform-origin:0 0;font-weight:700;-webkit-text-stroke:0.3px #9b999d;">Release Dev</span>
<span style="left:2165.90px;top:779px;font-size:23px;color:#9b999d;letter-spacing:-0.200px;font-weight:700;-webkit-text-stroke:0.3px #9b999d;">Conditions</span>
<svg style="left:2358px;top:779.6px;" width="20" height="20" viewBox="0 0 20 20"><path d="M1,10 H19 M10,1 V19" stroke="#5b595d" stroke-width="1.6"/></svg>
<span style="left:1852.06px;top:829px;font-size:23px;color:#e4e3e5;letter-spacing:0.229px;-webkit-text-stroke:0.3px #e4e3e5;">MyApp-Dev</span>
<div style="left:1852px;top:860.0px;width:534px;height:2px;background:#3d3b3f;"></div>
<span style="left:1852.67px;top:919px;font-size:23px;color:#9b999d;transform:scaleX(0.9752);transform-origin:0 0;font-weight:700;-webkit-text-stroke:0.3px #9b999d;">Release Prod</span>
<span style="left:2165.90px;top:919px;font-size:23px;color:#9b999d;letter-spacing:-0.200px;font-weight:700;-webkit-text-stroke:0.3px #9b999d;">Conditions</span>
<svg style="left:2358px;top:919.6px;" width="20" height="20" viewBox="0 0 20 20"><path d="M1,10 H19 M10,1 V19" stroke="#5b595d" stroke-width="1.6"/></svg>
<div style="left:1852px;top:966.3px;width:302px;height:28px;background:#403e42;"></div>
<span style="left:1852.06px;top:969px;font-size:23px;color:#e4e3e5;letter-spacing:0.412px;-webkit-text-stroke:0.3px #e4e3e5;">MyApp-Prod</span>
<div style="left:1852px;top:1000.0px;width:534px;height:2px;background:#3d3b3f;"></div>
<div style="left:2426.3px;top:563px;width:15.7px;height:453px;background:#6c6a6e;border-radius:8px;"></div>
</div></body></html>
